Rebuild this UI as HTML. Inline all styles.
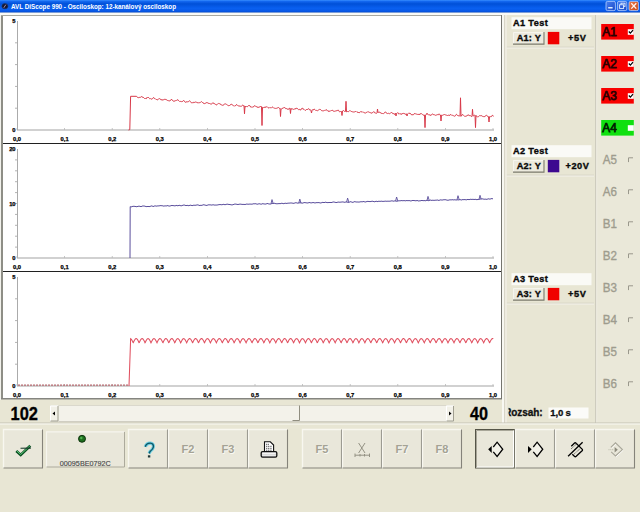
<!DOCTYPE html>
<html><head><meta charset="utf-8"><style>
html,body{margin:0;padding:0;width:640px;height:512px;overflow:hidden;background:#E8E6D4;}
svg{display:block;}
</style></head><body>
<svg width="640" height="512" viewBox="0 0 640 512">
<rect x="0" y="0" width="640" height="512" fill="#E8E6D4"/>
<defs>
<linearGradient id="tg" x1="0" y1="0" x2="0" y2="1">
<stop offset="0" stop-color="#3A90FF"/><stop offset="0.1" stop-color="#1468F0"/><stop offset="0.3" stop-color="#0050D8"/>
<stop offset="0.65" stop-color="#0A60F0"/><stop offset="0.88" stop-color="#0858E6"/><stop offset="1" stop-color="#0040C0"/></linearGradient>
<linearGradient id="bg1" x1="0" y1="0" x2="1" y2="1">
<stop offset="0" stop-color="#4A80F0"/><stop offset="1" stop-color="#1848C8"/></linearGradient>
<linearGradient id="bgc" x1="0" y1="0" x2="1" y2="1">
<stop offset="0" stop-color="#E8784A"/><stop offset="1" stop-color="#C84818"/></linearGradient>
</defs>
<rect x="0" y="0" width="640" height="12.7" fill="url(#tg)"/>
<rect x="0" y="12.7" width="640" height="2.3" fill="#FAFAF6"/>
<ellipse cx="4.9" cy="6.2" rx="3" ry="2.6" fill="#101838" stroke="#283868" stroke-width="0.6"/>
<line x1="3.8" y1="7.8" x2="5.8" y2="4.7" stroke="#C09AA8" stroke-width="0.9"/>
<text x="11" y="9.3" font-family='"Liberation Sans", sans-serif' font-size="7" font-weight="bold" fill="#FFFFFF" textLength="165" lengthAdjust="spacingAndGlyphs">AVL DiScope 990 - Osciloskop: 12-kanálový osciloskop</text>
<rect x="606" y="1.4" width="9.4" height="9.2" rx="1.5" fill="url(#bg1)" stroke="#B8D0FF" stroke-width="0.8"/>
<rect x="617.4" y="1.4" width="9.4" height="9.2" rx="1.5" fill="url(#bg1)" stroke="#B8D0FF" stroke-width="0.8"/>
<rect x="629" y="1.4" width="9.4" height="9.2" rx="1.5" fill="url(#bgc)" stroke="#B8D0FF" stroke-width="0.8"/>
<rect x="608.2" y="7" width="4.4" height="1.5" fill="#E0F0FF"/>
<rect x="621" y="3.2" width="4" height="3.2" fill="none" stroke="#E0F0FF" stroke-width="0.9"/><rect x="619.6" y="4.8" width="4" height="3.6" fill="#2a5ad8" stroke="#E0F0FF" stroke-width="0.9"/>
<path d="M631.3 3.3 L636.3 8.6 M636.3 3.3 L631.3 8.6" stroke="#FFF4F0" stroke-width="1.3"/>
<rect x="1" y="15" width="501" height="384" fill="#FFFFFF"/>
<rect x="0" y="15" width="1" height="385" fill="#F2F2EC"/>
<rect x="1" y="15" width="2" height="384" fill="#8E8E86"/>
<rect x="1" y="15" width="501" height="1" fill="#A8A8A0"/>
<rect x="1" y="398" width="501" height="1.5" fill="#858580"/>
<rect x="501" y="15" width="1" height="384" fill="#75756F"/>
<rect x="502" y="15" width="2" height="408" fill="#F8F8F2"/>
<rect x="3" y="143" width="498" height="1" fill="#202020"/>
<rect x="3" y="271" width="498" height="1" fill="#202020"/>
<rect x="17" y="21" width="1" height="109" fill="#ABABAB"/>
<rect x="17.0" y="129.5" width="477.0" height="1" fill="#A4A4A4"/>
<rect x="15.2" y="42.3" width="1.6" height="1" fill="#A0A0A0"/>
<rect x="15.2" y="64.1" width="1.6" height="1" fill="#A0A0A0"/>
<rect x="15.2" y="85.9" width="1.6" height="1" fill="#A0A0A0"/>
<rect x="15.2" y="107.7" width="1.6" height="1" fill="#A0A0A0"/>
<rect x="16.6" y="128" width="0.8" height="2" fill="#B8B8B8"/>
<text x="17.0" y="140.8" font-family='"Liberation Sans", sans-serif' font-size="5.8" font-weight="bold" fill="#000" stroke="#000" stroke-width="0.25" text-anchor="middle">0,0</text>
<rect x="64.2" y="128" width="0.8" height="2" fill="#B8B8B8"/>
<text x="64.6" y="140.8" font-family='"Liberation Sans", sans-serif' font-size="5.8" font-weight="bold" fill="#000" stroke="#000" stroke-width="0.25" text-anchor="middle">0,1</text>
<rect x="111.8" y="128" width="0.8" height="2" fill="#B8B8B8"/>
<text x="112.2" y="140.8" font-family='"Liberation Sans", sans-serif' font-size="5.8" font-weight="bold" fill="#000" stroke="#000" stroke-width="0.25" text-anchor="middle">0,2</text>
<rect x="159.4" y="128" width="0.8" height="2" fill="#B8B8B8"/>
<text x="159.8" y="140.8" font-family='"Liberation Sans", sans-serif' font-size="5.8" font-weight="bold" fill="#000" stroke="#000" stroke-width="0.25" text-anchor="middle">0,3</text>
<rect x="207.0" y="128" width="0.8" height="2" fill="#B8B8B8"/>
<text x="207.4" y="140.8" font-family='"Liberation Sans", sans-serif' font-size="5.8" font-weight="bold" fill="#000" stroke="#000" stroke-width="0.25" text-anchor="middle">0,4</text>
<rect x="254.6" y="128" width="0.8" height="2" fill="#B8B8B8"/>
<text x="255.0" y="140.8" font-family='"Liberation Sans", sans-serif' font-size="5.8" font-weight="bold" fill="#000" stroke="#000" stroke-width="0.25" text-anchor="middle">0,5</text>
<rect x="302.2" y="128" width="0.8" height="2" fill="#B8B8B8"/>
<text x="302.6" y="140.8" font-family='"Liberation Sans", sans-serif' font-size="5.8" font-weight="bold" fill="#000" stroke="#000" stroke-width="0.25" text-anchor="middle">0,6</text>
<rect x="349.8" y="128" width="0.8" height="2" fill="#B8B8B8"/>
<text x="350.2" y="140.8" font-family='"Liberation Sans", sans-serif' font-size="5.8" font-weight="bold" fill="#000" stroke="#000" stroke-width="0.25" text-anchor="middle">0,7</text>
<rect x="397.4" y="128" width="0.8" height="2" fill="#B8B8B8"/>
<text x="397.8" y="140.8" font-family='"Liberation Sans", sans-serif' font-size="5.8" font-weight="bold" fill="#000" stroke="#000" stroke-width="0.25" text-anchor="middle">0,8</text>
<rect x="445.0" y="128" width="0.8" height="2" fill="#B8B8B8"/>
<text x="445.4" y="140.8" font-family='"Liberation Sans", sans-serif' font-size="5.8" font-weight="bold" fill="#000" stroke="#000" stroke-width="0.25" text-anchor="middle">0,9</text>
<rect x="492.6" y="128" width="0.8" height="2" fill="#B8B8B8"/>
<text x="493.0" y="140.8" font-family='"Liberation Sans", sans-serif' font-size="5.8" font-weight="bold" fill="#000" stroke="#000" stroke-width="0.25" text-anchor="middle">1,0</text>
<text x="15.6" y="23" font-family='"Liberation Sans", sans-serif' font-size="5.8" font-weight="bold" fill="#000" stroke="#000" stroke-width="0.25" text-anchor="end">5</text>
<text x="15.6" y="132" font-family='"Liberation Sans", sans-serif' font-size="5.8" font-weight="bold" fill="#000" stroke="#000" stroke-width="0.25" text-anchor="end">0</text>
<rect x="17" y="149" width="1" height="109" fill="#ABABAB"/>
<rect x="17.0" y="257.5" width="477.0" height="1" fill="#A4A4A4"/>
<rect x="15.2" y="159.4" width="1.6" height="1" fill="#A0A0A0"/>
<rect x="15.2" y="170.3" width="1.6" height="1" fill="#A0A0A0"/>
<rect x="15.2" y="181.2" width="1.6" height="1" fill="#A0A0A0"/>
<rect x="15.2" y="192.1" width="1.6" height="1" fill="#A0A0A0"/>
<rect x="15.2" y="203.0" width="1.6" height="1" fill="#A0A0A0"/>
<rect x="15.2" y="213.9" width="1.6" height="1" fill="#A0A0A0"/>
<rect x="15.2" y="224.8" width="1.6" height="1" fill="#A0A0A0"/>
<rect x="15.2" y="235.7" width="1.6" height="1" fill="#A0A0A0"/>
<rect x="15.2" y="246.6" width="1.6" height="1" fill="#A0A0A0"/>
<rect x="16.6" y="256" width="0.8" height="2" fill="#B8B8B8"/>
<text x="17.0" y="268.9" font-family='"Liberation Sans", sans-serif' font-size="5.8" font-weight="bold" fill="#000" stroke="#000" stroke-width="0.25" text-anchor="middle">0,0</text>
<rect x="64.2" y="256" width="0.8" height="2" fill="#B8B8B8"/>
<text x="64.6" y="268.9" font-family='"Liberation Sans", sans-serif' font-size="5.8" font-weight="bold" fill="#000" stroke="#000" stroke-width="0.25" text-anchor="middle">0,1</text>
<rect x="111.8" y="256" width="0.8" height="2" fill="#B8B8B8"/>
<text x="112.2" y="268.9" font-family='"Liberation Sans", sans-serif' font-size="5.8" font-weight="bold" fill="#000" stroke="#000" stroke-width="0.25" text-anchor="middle">0,2</text>
<rect x="159.4" y="256" width="0.8" height="2" fill="#B8B8B8"/>
<text x="159.8" y="268.9" font-family='"Liberation Sans", sans-serif' font-size="5.8" font-weight="bold" fill="#000" stroke="#000" stroke-width="0.25" text-anchor="middle">0,3</text>
<rect x="207.0" y="256" width="0.8" height="2" fill="#B8B8B8"/>
<text x="207.4" y="268.9" font-family='"Liberation Sans", sans-serif' font-size="5.8" font-weight="bold" fill="#000" stroke="#000" stroke-width="0.25" text-anchor="middle">0,4</text>
<rect x="254.6" y="256" width="0.8" height="2" fill="#B8B8B8"/>
<text x="255.0" y="268.9" font-family='"Liberation Sans", sans-serif' font-size="5.8" font-weight="bold" fill="#000" stroke="#000" stroke-width="0.25" text-anchor="middle">0,5</text>
<rect x="302.2" y="256" width="0.8" height="2" fill="#B8B8B8"/>
<text x="302.6" y="268.9" font-family='"Liberation Sans", sans-serif' font-size="5.8" font-weight="bold" fill="#000" stroke="#000" stroke-width="0.25" text-anchor="middle">0,6</text>
<rect x="349.8" y="256" width="0.8" height="2" fill="#B8B8B8"/>
<text x="350.2" y="268.9" font-family='"Liberation Sans", sans-serif' font-size="5.8" font-weight="bold" fill="#000" stroke="#000" stroke-width="0.25" text-anchor="middle">0,7</text>
<rect x="397.4" y="256" width="0.8" height="2" fill="#B8B8B8"/>
<text x="397.8" y="268.9" font-family='"Liberation Sans", sans-serif' font-size="5.8" font-weight="bold" fill="#000" stroke="#000" stroke-width="0.25" text-anchor="middle">0,8</text>
<rect x="445.0" y="256" width="0.8" height="2" fill="#B8B8B8"/>
<text x="445.4" y="268.9" font-family='"Liberation Sans", sans-serif' font-size="5.8" font-weight="bold" fill="#000" stroke="#000" stroke-width="0.25" text-anchor="middle">0,9</text>
<rect x="492.6" y="256" width="0.8" height="2" fill="#B8B8B8"/>
<text x="493.0" y="268.9" font-family='"Liberation Sans", sans-serif' font-size="5.8" font-weight="bold" fill="#000" stroke="#000" stroke-width="0.25" text-anchor="middle">1,0</text>
<text x="15.6" y="151" font-family='"Liberation Sans", sans-serif' font-size="5.8" font-weight="bold" fill="#000" stroke="#000" stroke-width="0.25" text-anchor="end">20</text>
<text x="15.6" y="205.5" font-family='"Liberation Sans", sans-serif' font-size="5.8" font-weight="bold" fill="#000" stroke="#000" stroke-width="0.25" text-anchor="end">10</text>
<text x="15.6" y="260" font-family='"Liberation Sans", sans-serif' font-size="5.8" font-weight="bold" fill="#000" stroke="#000" stroke-width="0.25" text-anchor="end">0</text>
<rect x="17" y="277" width="1" height="109" fill="#ABABAB"/>
<rect x="17.0" y="385.5" width="477.0" height="1" fill="#A4A4A4"/>
<rect x="15.2" y="298.3" width="1.6" height="1" fill="#A0A0A0"/>
<rect x="15.2" y="320.1" width="1.6" height="1" fill="#A0A0A0"/>
<rect x="15.2" y="341.9" width="1.6" height="1" fill="#A0A0A0"/>
<rect x="15.2" y="363.7" width="1.6" height="1" fill="#A0A0A0"/>
<rect x="16.6" y="384" width="0.8" height="2" fill="#B8B8B8"/>
<text x="17.0" y="396.9" font-family='"Liberation Sans", sans-serif' font-size="5.8" font-weight="bold" fill="#000" stroke="#000" stroke-width="0.25" text-anchor="middle">0,0</text>
<rect x="64.2" y="384" width="0.8" height="2" fill="#B8B8B8"/>
<text x="64.6" y="396.9" font-family='"Liberation Sans", sans-serif' font-size="5.8" font-weight="bold" fill="#000" stroke="#000" stroke-width="0.25" text-anchor="middle">0,1</text>
<rect x="111.8" y="384" width="0.8" height="2" fill="#B8B8B8"/>
<text x="112.2" y="396.9" font-family='"Liberation Sans", sans-serif' font-size="5.8" font-weight="bold" fill="#000" stroke="#000" stroke-width="0.25" text-anchor="middle">0,2</text>
<rect x="159.4" y="384" width="0.8" height="2" fill="#B8B8B8"/>
<text x="159.8" y="396.9" font-family='"Liberation Sans", sans-serif' font-size="5.8" font-weight="bold" fill="#000" stroke="#000" stroke-width="0.25" text-anchor="middle">0,3</text>
<rect x="207.0" y="384" width="0.8" height="2" fill="#B8B8B8"/>
<text x="207.4" y="396.9" font-family='"Liberation Sans", sans-serif' font-size="5.8" font-weight="bold" fill="#000" stroke="#000" stroke-width="0.25" text-anchor="middle">0,4</text>
<rect x="254.6" y="384" width="0.8" height="2" fill="#B8B8B8"/>
<text x="255.0" y="396.9" font-family='"Liberation Sans", sans-serif' font-size="5.8" font-weight="bold" fill="#000" stroke="#000" stroke-width="0.25" text-anchor="middle">0,5</text>
<rect x="302.2" y="384" width="0.8" height="2" fill="#B8B8B8"/>
<text x="302.6" y="396.9" font-family='"Liberation Sans", sans-serif' font-size="5.8" font-weight="bold" fill="#000" stroke="#000" stroke-width="0.25" text-anchor="middle">0,6</text>
<rect x="349.8" y="384" width="0.8" height="2" fill="#B8B8B8"/>
<text x="350.2" y="396.9" font-family='"Liberation Sans", sans-serif' font-size="5.8" font-weight="bold" fill="#000" stroke="#000" stroke-width="0.25" text-anchor="middle">0,7</text>
<rect x="397.4" y="384" width="0.8" height="2" fill="#B8B8B8"/>
<text x="397.8" y="396.9" font-family='"Liberation Sans", sans-serif' font-size="5.8" font-weight="bold" fill="#000" stroke="#000" stroke-width="0.25" text-anchor="middle">0,8</text>
<rect x="445.0" y="384" width="0.8" height="2" fill="#B8B8B8"/>
<text x="445.4" y="396.9" font-family='"Liberation Sans", sans-serif' font-size="5.8" font-weight="bold" fill="#000" stroke="#000" stroke-width="0.25" text-anchor="middle">0,9</text>
<rect x="492.6" y="384" width="0.8" height="2" fill="#B8B8B8"/>
<text x="493.0" y="396.9" font-family='"Liberation Sans", sans-serif' font-size="5.8" font-weight="bold" fill="#000" stroke="#000" stroke-width="0.25" text-anchor="middle">1,0</text>
<text x="15.6" y="279" font-family='"Liberation Sans", sans-serif' font-size="5.8" font-weight="bold" fill="#000" stroke="#000" stroke-width="0.25" text-anchor="end">5</text>
<text x="15.6" y="388" font-family='"Liberation Sans", sans-serif' font-size="5.8" font-weight="bold" fill="#000" stroke="#000" stroke-width="0.25" text-anchor="end">0</text>
<path d="M18 385.2 L128.5 385.2" stroke="#B86A70" stroke-width="1.3" stroke-dasharray="2 1"/>
<path d="M128.5 130.0 L129.8 129.6 L130.6 96.3 L136.0 96.3 L136.5 96.4 L137.0 96.6 L137.5 97.4 L138.0 97.1 L138.5 97.8 L139.0 97.7 L139.5 97.4 L140.0 97.7 L140.5 97.1 L141.0 97.2 L141.5 96.6 L142.0 96.4 L142.5 97.1 L143.0 97.9 L143.5 97.5 L144.0 97.9 L144.5 98.5 L145.0 98.9 L145.5 98.5 L146.0 98.2 L146.5 98.6 L147.0 97.4 L147.5 97.9 L148.0 97.2 L148.5 97.5 L149.0 97.8 L149.5 98.3 L150.0 99.1 L150.5 98.6 L151.0 99.1 L151.5 99.1 L152.0 98.7 L152.5 98.7 L153.0 97.9 L153.5 97.6 L154.0 97.7 L154.5 98.6 L155.0 98.7 L155.5 98.9 L156.0 99.4 L156.5 99.5 L157.0 99.4 L157.5 99.8 L158.0 99.6 L158.5 98.9 L159.0 99.0 L159.5 98.6 L160.0 99.0 L160.5 99.3 L161.0 99.2 L161.5 100.2 L162.0 99.5 L162.5 100.0 L163.0 100.4 L163.5 99.7 L164.0 99.9 L164.5 99.2 L165.0 99.6 L165.5 99.4 L166.0 99.3 L166.5 100.0 L167.0 99.8 L167.5 100.5 L168.0 100.6 L168.5 100.7 L169.0 100.6 L169.5 100.9 L170.0 100.9 L170.5 100.2 L171.0 100.1 L171.5 99.2 L172.0 100.0 L172.5 100.3 L173.0 101.0 L173.5 101.2 L174.0 100.8 L174.5 101.0 L175.0 101.3 L175.5 100.6 L176.0 100.9 L176.5 100.4 L177.0 100.0 L177.5 99.6 L178.0 100.6 L178.5 100.4 L179.0 100.8 L179.5 101.3 L180.0 101.9 L180.5 101.3 L181.0 101.6 L181.5 101.6 L182.0 101.8 L182.5 101.5 L183.0 101.2 L183.5 100.3 L184.0 100.8 L184.5 101.2 L185.0 102.0 L185.5 102.4 L186.0 101.7 L186.5 101.9 L187.0 101.9 L187.5 101.8 L188.0 101.9 L188.5 101.7 L189.0 101.1 L189.5 100.6 L190.0 101.4 L190.5 101.7 L191.0 102.2 L191.5 102.9 L192.0 102.8 L192.5 102.7 L193.0 102.8 L193.5 102.7 L194.0 101.9 L194.5 102.5 L195.0 102.0 L195.5 102.0 L196.0 102.3 L196.5 102.3 L197.0 102.6 L197.5 102.5 L198.0 103.2 L198.5 102.7 L199.0 102.7 L199.5 102.7 L200.0 102.4 L200.5 102.4 L201.0 101.8 L201.5 101.6 L202.0 102.2 L202.5 102.5 L203.0 103.0 L203.5 102.9 L204.0 103.9 L204.5 103.7 L205.0 103.2 L205.5 103.2 L206.0 103.1 L206.5 102.8 L207.0 102.2 L207.5 103.0 L208.0 103.5 L208.5 103.3 L209.0 103.7 L209.5 103.5 L210.0 103.6 L210.5 103.9 L211.0 103.8 L211.5 104.2 L212.0 103.3 L212.5 102.9 L213.0 103.5 L213.5 103.1 L214.0 103.2 L214.5 103.9 L215.0 103.7 L215.5 104.4 L216.0 105.0 L216.5 104.9 L217.0 104.6 L217.5 104.0 L218.0 103.9 L218.5 103.4 L219.0 103.7 L219.5 103.6 L220.0 104.3 L220.5 104.2 L221.0 104.3 L221.5 105.1 L222.0 105.4 L222.5 105.3 L223.0 105.2 L223.5 105.0 L224.0 104.7 L224.5 103.9 L225.0 103.8 L225.5 103.9 L226.0 104.0 L226.5 104.3 L227.0 104.9 L227.5 105.0 L228.0 105.6 L228.5 105.8 L229.0 105.2 L229.5 105.5 L230.0 105.3 L230.5 105.0 L231.0 104.1 L231.5 104.3 L232.0 104.6 L232.5 104.9 L233.0 105.2 L233.5 105.8 L234.0 106.2 L234.5 106.1 L235.0 105.6 L235.5 105.6 L236.0 105.5 L236.5 104.5 L237.0 104.8 L237.5 105.4 L238.0 105.7 L238.5 105.9 L239.0 105.9 L239.5 105.8 L240.0 106.5 L240.5 106.0 L241.0 106.3 L241.5 106.3 L242.0 105.5 L242.5 105.2 L243.0 105.5 L243.5 105.7 L244.0 105.5 L244.5 113.8 L245.0 106.0 L245.5 106.9 L246.0 106.9 L246.5 106.2 L247.0 106.7 L247.5 106.7 L248.0 106.1 L248.5 105.5 L249.0 105.5 L249.5 105.5 L250.0 105.8 L250.5 107.0 L251.0 106.9 L251.5 106.9 L252.0 107.4 L252.5 106.9 L253.0 107.2 L253.5 106.9 L254.0 106.0 L254.5 105.7 L255.0 105.7 L255.5 106.0 L256.0 106.7 L256.5 106.7 L257.0 107.1 L257.5 106.9 L258.0 107.8 L258.5 107.1 L259.0 107.1 L259.5 107.0 L260.0 107.0 L260.5 106.2 L261.0 106.8 L261.5 106.7 L262.0 125.5 L262.5 107.4 L263.0 107.1 L263.5 107.6 L264.0 107.4 L264.5 107.1 L265.0 107.8 L265.5 106.9 L266.0 106.9 L266.5 106.8 L267.0 106.8 L267.5 107.0 L268.0 107.5 L268.5 107.8 L269.0 108.2 L269.5 107.7 L270.0 108.1 L270.5 107.7 L271.0 107.6 L271.5 107.8 L272.0 107.3 L272.5 107.0 L273.0 107.4 L273.5 107.9 L274.0 107.8 L274.5 108.2 L275.0 108.3 L275.5 108.4 L276.0 108.6 L276.5 108.3 L277.0 108.2 L277.5 107.9 L278.0 108.0 L278.5 107.4 L279.0 107.9 L279.5 108.4 L280.0 108.0 L280.5 116.5 L281.0 109.1 L281.5 109.1 L282.0 108.4 L282.5 108.3 L283.0 108.4 L283.5 107.8 L284.0 107.6 L284.5 107.1 L285.0 108.1 L285.5 108.6 L286.0 109.0 L286.5 108.5 L287.0 109.2 L287.5 109.3 L288.0 108.7 L288.5 109.3 L289.0 109.2 L289.5 108.2 L290.0 108.6 L290.5 113.5 L291.0 108.3 L291.5 109.2 L292.0 109.3 L292.5 108.9 L293.0 109.3 L293.5 109.4 L294.0 109.2 L294.5 109.0 L295.0 108.9 L295.5 109.0 L296.0 108.0 L296.5 108.3 L297.0 108.6 L297.5 108.5 L298.0 109.2 L298.5 109.7 L299.0 109.7 L299.5 109.3 L300.0 110.2 L300.5 109.8 L301.0 109.8 L301.5 108.6 L302.0 108.5 L302.5 108.2 L303.0 109.3 L303.5 109.1 L304.0 109.3 L304.5 109.8 L305.0 110.4 L305.5 110.4 L306.0 109.7 L306.5 109.5 L307.0 110.0 L307.5 109.4 L308.0 109.2 L308.5 108.6 L309.0 108.9 L309.5 109.9 L310.0 109.9 L310.5 109.8 L311.0 110.8 L311.5 113.0 L312.0 110.6 L312.5 109.7 L313.0 110.2 L313.5 109.1 L314.0 109.6 L314.5 109.3 L315.0 109.6 L315.5 110.1 L316.0 110.8 L316.5 110.3 L317.0 110.3 L317.5 110.7 L318.0 110.3 L318.5 110.0 L319.0 109.8 L319.5 109.4 L320.0 109.2 L320.5 109.5 L321.0 109.9 L321.5 110.6 L322.0 110.4 L322.5 110.8 L323.0 110.6 L323.5 110.8 L324.0 110.4 L324.5 110.4 L325.0 109.9 L325.5 110.3 L326.0 109.8 L326.5 109.7 L327.0 110.4 L327.5 111.1 L328.0 110.6 L328.5 111.5 L329.0 111.2 L329.5 111.2 L330.0 111.4 L330.5 110.8 L331.0 110.6 L331.5 110.5 L332.0 110.5 L332.5 110.2 L333.0 111.0 L333.5 111.2 L334.0 111.4 L334.5 111.3 L335.0 111.4 L335.5 111.0 L336.0 111.0 L336.5 110.7 L337.0 111.1 L337.5 110.3 L338.0 109.9 L338.5 110.2 L339.0 111.4 L339.5 111.7 L340.0 111.7 L340.5 111.5 L341.0 111.5 L341.5 111.5 L342.0 115.5 L342.5 111.0 L343.0 111.1 L343.5 110.5 L344.0 111.0 L344.5 111.4 L345.0 111.4 L345.5 111.4 L346.0 101.3 L346.5 111.8 L347.0 111.9 L347.5 111.5 L348.0 111.7 L348.5 111.6 L349.0 111.3 L349.5 110.7 L350.0 110.9 L350.5 110.8 L351.0 111.4 L351.5 111.5 L352.0 112.0 L352.5 111.8 L353.0 111.8 L353.5 112.0 L354.0 111.8 L354.5 111.9 L355.0 111.6 L355.5 111.5 L356.0 111.3 L356.5 111.8 L357.0 112.3 L357.5 112.1 L358.0 112.2 L358.5 113.0 L359.0 112.2 L359.5 112.7 L360.0 112.4 L360.5 111.6 L361.0 112.1 L361.5 111.8 L362.0 111.6 L362.5 112.1 L363.0 112.5 L363.5 112.1 L364.0 112.7 L364.5 112.8 L365.0 113.1 L365.5 113.0 L366.0 112.8 L366.5 112.4 L367.0 112.4 L367.5 111.8 L368.0 112.0 L368.5 111.9 L369.0 112.0 L369.5 112.4 L370.0 112.8 L370.5 112.6 L371.0 113.4 L371.5 113.0 L372.0 112.9 L372.5 112.6 L373.0 112.3 L373.5 111.8 L374.0 111.6 L374.5 112.7 L375.0 113.0 L375.5 113.0 L376.0 113.2 L376.5 113.4 L377.0 112.8 L377.5 109.0 L378.0 112.7 L378.5 112.2 L379.0 112.1 L379.5 112.2 L380.0 112.0 L380.5 112.9 L381.0 113.5 L381.5 113.3 L382.0 113.3 L382.5 113.5 L383.0 113.6 L383.5 113.6 L384.0 113.3 L384.5 113.0 L385.0 112.1 L385.5 111.9 L386.0 112.4 L386.5 113.2 L387.0 113.1 L387.5 113.6 L388.0 113.2 L388.5 113.3 L389.0 113.4 L389.5 113.7 L390.0 113.5 L390.5 113.2 L391.0 112.5 L391.5 112.5 L392.0 112.8 L392.5 113.2 L393.0 113.1 L393.5 114.1 L394.0 113.6 L394.5 114.4 L395.0 114.3 L395.5 113.3 L396.0 116.0 L396.5 113.5 L397.0 113.4 L397.5 112.7 L398.0 112.9 L398.5 113.2 L399.0 114.2 L399.5 113.7 L400.0 114.2 L400.5 113.8 L401.0 114.1 L401.5 114.4 L402.0 113.3 L402.5 113.7 L403.0 113.1 L403.5 113.4 L404.0 113.6 L404.5 113.5 L405.0 114.4 L405.5 114.2 L406.0 113.9 L406.5 113.9 L407.0 116.0 L407.5 114.1 L408.0 113.7 L408.5 113.2 L409.0 113.1 L409.5 113.1 L410.0 114.0 L410.5 113.5 L411.0 114.5 L411.5 114.8 L412.0 114.2 L412.5 115.0 L413.0 114.7 L413.5 114.7 L414.0 113.8 L414.5 113.6 L415.0 113.3 L415.5 114.0 L416.0 114.0 L416.5 114.1 L417.0 114.4 L417.5 114.4 L418.0 114.3 L418.5 114.3 L419.0 115.0 L419.5 114.2 L420.0 114.6 L420.5 113.6 L421.0 113.3 L421.5 113.8 L422.0 113.8 L422.5 114.3 L423.0 115.1 L423.5 115.2 L424.0 115.3 L424.5 115.1 L425.0 127.6 L425.5 115.1 L426.0 114.4 L426.5 114.3 L427.0 113.2 L427.5 114.2 L428.0 114.3 L428.5 114.9 L429.0 115.0 L429.5 114.9 L430.0 114.7 L430.5 115.5 L431.0 114.6 L431.5 114.8 L432.0 114.4 L432.5 114.0 L433.0 114.1 L433.5 114.7 L434.0 114.3 L434.5 115.0 L435.0 114.9 L435.5 115.3 L436.0 115.2 L436.5 115.0 L437.0 114.8 L437.5 114.6 L438.0 115.1 L438.5 114.3 L439.0 113.8 L439.5 114.8 L440.0 115.3 L440.5 115.0 L441.0 121.0 L441.5 115.2 L442.0 115.1 L442.5 115.3 L443.0 114.9 L443.5 114.8 L444.0 114.6 L444.5 114.5 L445.0 114.7 L445.5 114.9 L446.0 114.9 L446.5 115.2 L447.0 115.5 L447.5 115.5 L448.0 115.5 L448.5 115.2 L449.0 115.2 L449.5 115.7 L450.0 114.6 L450.5 114.6 L451.0 114.6 L451.5 115.2 L452.0 114.9 L452.5 115.3 L453.0 115.5 L453.5 115.7 L454.0 115.8 L454.5 116.2 L455.0 116.0 L455.5 115.7 L456.0 114.6 L456.5 114.3 L457.0 114.9 L457.5 115.5 L458.0 115.4 L458.5 115.8 L459.0 115.4 L459.5 115.9 L460.0 116.4 L460.5 97.8 L461.0 116.1 L461.5 116.0 L462.0 114.9 L462.5 114.5 L463.0 114.6 L463.5 115.3 L464.0 115.8 L464.5 116.3 L465.0 116.3 L465.5 116.3 L466.0 116.4 L466.5 116.0 L467.0 115.9 L467.5 115.2 L468.0 115.6 L468.5 114.7 L469.0 115.6 L469.5 115.6 L470.0 115.6 L470.5 115.7 L471.0 116.0 L471.5 116.5 L472.0 116.5 L472.5 109.3 L473.0 115.6 L473.5 115.8 L474.0 115.5 L474.5 115.0 L475.0 115.1 L475.5 127.6 L476.0 115.5 L476.5 116.1 L477.0 116.4 L477.5 117.0 L478.0 116.6 L478.5 116.7 L479.0 116.1 L479.5 115.6 L480.0 115.3 L480.5 115.7 L481.0 115.7 L481.5 115.7 L482.0 115.7 L482.5 116.4 L483.0 116.8 L483.5 116.6 L484.0 116.4 L484.5 116.6 L485.0 116.7 L485.5 115.7 L486.0 115.2 L486.5 115.2 L487.0 115.7 L487.5 116.3 L488.0 116.1 L488.5 116.9 L489.0 122.0 L489.5 116.8 L490.0 116.5 L490.5 117.1 L491.0 116.2 L491.5 116.4 L492.0 115.5 L492.5 115.3 L493.0 116.2 L493.5 116.1" fill="none" stroke="#D83848" stroke-width="1"/>
<path d="M130.0 258.0 L130.2 206.6 L131.0 207.0 L132.0 206.6 L133.0 206.3 L134.0 206.3 L135.0 206.4 L136.0 206.6 L137.0 206.8 L138.0 206.2 L139.0 206.3 L140.0 206.2 L141.0 206.8 L142.0 206.1 L143.0 206.0 L144.0 206.0 L145.0 206.2 L146.0 206.6 L147.0 206.6 L148.0 206.4 L149.0 206.6 L150.0 206.5 L151.0 206.0 L152.0 205.9 L153.0 206.5 L154.0 206.3 L155.0 205.7 L156.0 206.2 L157.0 206.0 L158.0 205.9 L159.0 205.9 L160.0 205.7 L161.0 205.6 L162.0 205.8 L163.0 205.8 L164.0 206.3 L165.0 205.6 L166.0 206.2 L167.0 205.6 L168.0 205.7 L169.0 206.1 L170.0 206.0 L171.0 205.7 L172.0 205.4 L173.0 205.7 L174.0 205.6 L175.0 206.0 L176.0 205.4 L177.0 205.5 L178.0 205.9 L179.0 205.2 L180.0 205.5 L181.0 205.8 L182.0 205.7 L183.0 205.1 L184.0 205.1 L185.0 205.1 L186.0 205.8 L187.0 205.2 L188.0 205.6 L189.0 205.7 L190.0 205.2 L191.0 205.2 L192.0 205.7 L193.0 205.4 L194.0 205.1 L195.0 205.4 L196.0 205.1 L197.0 205.0 L198.0 204.8 L199.0 205.4 L200.0 205.5 L201.0 205.2 L202.0 205.5 L203.0 204.7 L204.0 204.9 L205.0 205.0 L206.0 205.4 L207.0 205.4 L208.0 204.9 L209.0 204.8 L210.0 204.9 L211.0 204.9 L212.0 205.2 L213.0 204.6 L214.0 205.1 L215.0 205.0 L216.0 205.1 L217.0 205.0 L218.0 204.9 L219.0 204.6 L220.0 204.6 L221.0 204.6 L222.0 204.9 L223.0 204.3 L224.0 204.4 L225.0 204.8 L226.0 204.4 L227.0 204.2 L228.0 204.2 L229.0 204.6 L230.0 204.4 L231.0 204.9 L232.0 204.8 L233.0 204.8 L234.0 204.2 L235.0 204.1 L236.0 204.1 L237.0 204.4 L238.0 204.5 L239.0 204.3 L240.0 204.1 L241.0 204.2 L242.0 204.4 L243.0 204.4 L244.0 204.4 L245.0 204.5 L246.0 204.3 L247.0 203.9 L248.0 204.4 L249.0 204.0 L250.0 204.2 L251.0 204.0 L252.0 204.3 L253.0 203.8 L254.0 203.8 L255.0 203.8 L256.0 203.7 L257.0 204.3 L258.0 204.0 L259.0 203.8 L260.0 203.8 L261.0 204.3 L262.0 203.9 L263.0 203.6 L264.0 204.1 L265.0 203.9 L266.0 204.2 L267.0 203.4 L268.0 203.7 L269.0 204.0 L270.0 204.0 L271.0 204.0 L272.0 203.3 L273.0 203.5 L274.0 203.3 L275.0 203.3 L276.0 203.9 L277.0 203.6 L278.0 203.9 L279.0 203.4 L280.0 203.8 L281.0 203.4 L282.0 203.2 L283.0 203.6 L284.0 203.7 L285.0 203.1 L286.0 203.4 L287.0 203.4 L288.0 203.1 L289.0 203.2 L290.0 203.0 L291.0 203.0 L292.0 203.0 L293.0 203.3 L294.0 203.3 L295.0 202.9 L296.0 202.7 L297.0 203.0 L298.0 203.2 L299.0 202.8 L300.0 202.9 L301.0 202.8 L302.0 203.2 L303.0 203.0 L304.0 202.6 L305.0 202.6 L306.0 202.8 L307.0 202.9 L308.0 203.0 L309.0 202.5 L310.0 202.6 L311.0 203.0 L312.0 202.7 L313.0 202.6 L314.0 202.6 L315.0 203.1 L316.0 202.6 L317.0 202.7 L318.0 202.6 L319.0 202.6 L320.0 202.9 L321.0 203.0 L322.0 202.5 L323.0 202.3 L324.0 202.7 L325.0 202.3 L326.0 202.1 L327.0 202.8 L328.0 202.4 L329.0 202.7 L330.0 202.3 L331.0 202.7 L332.0 202.3 L333.0 202.1 L334.0 201.9 L335.0 202.4 L336.0 202.4 L337.0 202.6 L338.0 201.9 L339.0 202.3 L340.0 202.1 L341.0 202.2 L342.0 201.9 L343.0 202.0 L344.0 202.1 L345.0 202.4 L346.0 201.8 L347.0 202.1 L348.0 202.3 L349.0 202.4 L350.0 201.8 L351.0 201.7 L352.0 202.3 L353.0 202.3 L354.0 201.9 L355.0 201.5 L356.0 202.2 L357.0 201.8 L358.0 202.2 L359.0 201.9 L360.0 202.1 L361.0 201.5 L362.0 202.0 L363.0 201.5 L364.0 201.6 L365.0 202.0 L366.0 201.9 L367.0 201.4 L368.0 201.4 L369.0 201.5 L370.0 201.6 L371.0 201.5 L372.0 201.2 L373.0 201.3 L374.0 201.7 L375.0 201.8 L376.0 201.1 L377.0 201.5 L378.0 201.6 L379.0 201.0 L380.0 201.6 L381.0 201.0 L382.0 201.4 L383.0 201.3 L384.0 201.4 L385.0 201.1 L386.0 201.2 L387.0 201.3 L388.0 201.1 L389.0 201.3 L390.0 201.1 L391.0 201.1 L392.0 200.7 L393.0 201.2 L394.0 201.1 L395.0 200.8 L396.0 201.2 L397.0 201.2 L398.0 201.0 L399.0 200.7 L400.0 200.9 L401.0 200.6 L402.0 200.6 L403.0 200.8 L404.0 200.5 L405.0 200.8 L406.0 200.8 L407.0 200.4 L408.0 200.9 L409.0 200.4 L410.0 200.9 L411.0 200.9 L412.0 200.7 L413.0 200.3 L414.0 200.7 L415.0 200.5 L416.0 201.0 L417.0 200.3 L418.0 200.9 L419.0 201.0 L420.0 200.7 L421.0 200.8 L422.0 200.2 L423.0 200.9 L424.0 200.4 L425.0 200.8 L426.0 200.7 L427.0 200.1 L428.0 200.6 L429.0 200.7 L430.0 200.0 L431.0 200.2 L432.0 200.5 L433.0 200.0 L434.0 200.6 L435.0 200.0 L436.0 200.4 L437.0 199.9 L438.0 200.2 L439.0 200.5 L440.0 199.9 L441.0 199.9 L442.0 200.1 L443.0 199.9 L444.0 199.7 L445.0 199.8 L446.0 199.7 L447.0 200.3 L448.0 200.1 L449.0 200.2 L450.0 199.6 L451.0 200.1 L452.0 199.6 L453.0 199.9 L454.0 199.9 L455.0 199.7 L456.0 200.1 L457.0 199.8 L458.0 199.8 L459.0 200.0 L460.0 199.4 L461.0 200.1 L462.0 199.8 L463.0 199.5 L464.0 199.8 L465.0 199.4 L466.0 200.0 L467.0 199.6 L468.0 199.4 L469.0 199.7 L470.0 199.4 L471.0 199.2 L472.0 199.6 L473.0 199.1 L474.0 199.7 L475.0 199.2 L476.0 199.5 L477.0 199.7 L478.0 199.4 L479.0 199.4 L480.0 199.1 L481.0 198.9 L482.0 198.9 L483.0 198.9 L484.0 199.3 L485.0 199.1 L486.0 199.2 L487.0 199.4 L488.0 198.8 L489.0 198.9 L490.0 199.2 L491.0 198.7 L492.0 198.6 L493.0 198.9" fill="none" stroke="#5A4E9C" stroke-width="1"/>
<path d="M271.0 203.6 L272.0 199.6 L273.2 203.6" fill="none" stroke="#5A4E9C" stroke-width="0.9"/>
<path d="M298.8 203.1 L299.8 199.1 L301.0 203.1" fill="none" stroke="#5A4E9C" stroke-width="0.9"/>
<path d="M346.6 202.1 L347.6 198.1 L348.8 202.1" fill="none" stroke="#5A4E9C" stroke-width="0.9"/>
<path d="M395.6 201.0 L396.6 197.0 L397.8 201.0" fill="none" stroke="#5A4E9C" stroke-width="0.9"/>
<path d="M427.0 200.4 L428.0 196.4 L429.2 200.4" fill="none" stroke="#5A4E9C" stroke-width="0.9"/>
<path d="M457.0 199.7 L458.0 195.7 L459.2 199.7" fill="none" stroke="#5A4E9C" stroke-width="0.9"/>
<path d="M479.0 199.3 L480.0 195.3 L481.2 199.3" fill="none" stroke="#5A4E9C" stroke-width="0.9"/>
<path d="M129.00 386.00 L130.50 342.50 L130.60 338.68 L130.90 338.87 L131.20 339.15 L131.50 339.53 L131.80 340.00 L132.10 340.54 L132.40 341.13 L132.70 341.78 L133.00 342.45 L133.30 342.67 L133.60 342.00 L133.90 341.34 L134.20 340.73 L134.50 340.17 L134.80 339.68 L135.10 339.27 L135.40 338.95 L135.70 338.73 L136.00 338.62 L136.30 338.61 L136.60 338.71 L136.90 338.92 L137.20 339.22 L137.50 339.62 L137.80 340.10 L138.10 340.65 L138.40 341.26 L138.70 341.91 L139.00 342.58 L139.30 342.54 L139.60 341.86 L139.90 341.22 L140.20 340.61 L140.50 340.07 L140.80 339.59 L141.10 339.20 L141.40 338.90 L141.70 338.70 L142.00 338.61 L142.30 338.62 L142.60 338.74 L142.90 338.97 L143.20 339.29 L143.50 339.71 L143.80 340.21 L144.10 340.77 L144.40 341.39 L144.70 342.04 L145.00 342.72 L145.30 342.40 L145.60 341.73 L145.90 341.09 L146.20 340.50 L146.50 339.97 L146.80 339.51 L147.10 339.13 L147.40 338.85 L147.70 338.67 L148.00 338.60 L148.30 338.64 L148.60 338.78 L148.90 339.03 L149.20 339.37 L149.50 339.80 L149.80 340.31 L150.10 340.89 L150.40 341.52 L150.70 342.18 L151.00 342.85 L151.30 342.27 L151.60 341.60 L151.90 340.97 L152.20 340.39 L152.50 339.87 L152.80 339.42 L153.10 339.07 L153.40 338.81 L153.70 338.65 L154.00 338.60 L154.30 338.66 L154.60 338.82 L154.90 339.09 L155.20 339.45 L155.50 339.90 L155.80 340.42 L156.10 341.01 L156.40 341.64 L156.70 342.31 L157.00 342.81 L157.30 342.13 L157.60 341.47 L157.90 340.85 L158.20 340.28 L158.50 339.77 L158.80 339.35 L159.10 339.01 L159.40 338.77 L159.70 338.63 L160.00 338.60 L160.30 338.68 L160.60 338.87 L160.90 339.15 L161.20 339.53 L161.50 340.00 L161.80 340.54 L162.10 341.13 L162.40 341.78 L162.70 342.45 L163.00 342.67 L163.30 342.00 L163.60 341.34 L163.90 340.73 L164.20 340.17 L164.50 339.68 L164.80 339.27 L165.10 338.95 L165.40 338.73 L165.70 338.62 L166.00 338.61 L166.30 338.71 L166.60 338.92 L166.90 339.22 L167.20 339.62 L167.50 340.10 L167.80 340.65 L168.10 341.26 L168.40 341.91 L168.70 342.58 L169.00 342.54 L169.30 341.86 L169.60 341.22 L169.90 340.61 L170.20 340.07 L170.50 339.59 L170.80 339.20 L171.10 338.90 L171.40 338.70 L171.70 338.61 L172.00 338.62 L172.30 338.74 L172.60 338.97 L172.90 339.29 L173.20 339.71 L173.50 340.21 L173.80 340.77 L174.10 341.39 L174.40 342.04 L174.70 342.72 L175.00 342.40 L175.30 341.73 L175.60 341.09 L175.90 340.50 L176.20 339.97 L176.50 339.51 L176.80 339.13 L177.10 338.85 L177.40 338.67 L177.70 338.60 L178.00 338.64 L178.30 338.78 L178.60 339.03 L178.90 339.37 L179.20 339.80 L179.50 340.31 L179.80 340.89 L180.10 341.52 L180.40 342.18 L180.70 342.85 L181.00 342.27 L181.30 341.60 L181.60 340.97 L181.90 340.39 L182.20 339.87 L182.50 339.42 L182.80 339.07 L183.10 338.81 L183.40 338.65 L183.70 338.60 L184.00 338.66 L184.30 338.82 L184.60 339.09 L184.90 339.45 L185.20 339.90 L185.50 340.42 L185.80 341.01 L186.10 341.64 L186.40 342.31 L186.70 342.81 L187.00 342.13 L187.30 341.47 L187.60 340.85 L187.90 340.28 L188.20 339.77 L188.50 339.35 L188.80 339.01 L189.10 338.77 L189.40 338.63 L189.70 338.60 L190.00 338.68 L190.30 338.87 L190.60 339.15 L190.90 339.53 L191.20 340.00 L191.50 340.54 L191.80 341.13 L192.10 341.78 L192.40 342.45 L192.70 342.67 L193.00 342.00 L193.30 341.34 L193.60 340.73 L193.90 340.17 L194.20 339.68 L194.50 339.27 L194.80 338.95 L195.10 338.73 L195.40 338.62 L195.70 338.61 L196.00 338.71 L196.30 338.92 L196.60 339.22 L196.90 339.62 L197.20 340.10 L197.50 340.65 L197.80 341.26 L198.10 341.91 L198.40 342.58 L198.70 342.54 L199.00 341.86 L199.30 341.22 L199.60 340.61 L199.90 340.07 L200.20 339.59 L200.50 339.20 L200.80 338.90 L201.10 338.70 L201.40 338.61 L201.70 338.62 L202.00 338.74 L202.30 338.97 L202.60 339.29 L202.90 339.71 L203.20 340.21 L203.50 340.77 L203.80 341.39 L204.10 342.04 L204.40 342.72 L204.70 342.40 L205.00 341.73 L205.30 341.09 L205.60 340.50 L205.90 339.97 L206.20 339.51 L206.50 339.13 L206.80 338.85 L207.10 338.67 L207.40 338.60 L207.70 338.64 L208.00 338.78 L208.30 339.03 L208.60 339.37 L208.90 339.80 L209.20 340.31 L209.50 340.89 L209.80 341.52 L210.10 342.18 L210.40 342.85 L210.70 342.27 L211.00 341.60 L211.30 340.97 L211.60 340.39 L211.90 339.87 L212.20 339.42 L212.50 339.07 L212.80 338.81 L213.10 338.65 L213.40 338.60 L213.70 338.66 L214.00 338.82 L214.30 339.09 L214.60 339.45 L214.90 339.90 L215.20 340.42 L215.50 341.01 L215.80 341.64 L216.10 342.31 L216.40 342.81 L216.70 342.13 L217.00 341.47 L217.30 340.85 L217.60 340.28 L217.90 339.77 L218.20 339.35 L218.50 339.01 L218.80 338.77 L219.10 338.63 L219.40 338.60 L219.70 338.68 L220.00 338.87 L220.30 339.15 L220.60 339.53 L220.90 340.00 L221.20 340.54 L221.50 341.13 L221.80 341.78 L222.10 342.45 L222.40 342.67 L222.70 342.00 L223.00 341.34 L223.30 340.73 L223.60 340.17 L223.90 339.68 L224.20 339.27 L224.50 338.95 L224.80 338.73 L225.10 338.62 L225.40 338.61 L225.70 338.71 L226.00 338.92 L226.30 339.22 L226.60 339.62 L226.90 340.10 L227.20 340.65 L227.50 341.26 L227.80 341.91 L228.10 342.58 L228.40 342.54 L228.70 341.86 L229.00 341.22 L229.30 340.61 L229.60 340.07 L229.90 339.59 L230.20 339.20 L230.50 338.90 L230.80 338.70 L231.10 338.61 L231.40 338.62 L231.70 338.74 L232.00 338.97 L232.30 339.29 L232.60 339.71 L232.90 340.21 L233.20 340.77 L233.50 341.39 L233.80 342.04 L234.10 342.72 L234.40 342.40 L234.70 341.73 L235.00 341.09 L235.30 340.50 L235.60 339.97 L235.90 339.51 L236.20 339.13 L236.50 338.85 L236.80 338.67 L237.10 338.60 L237.40 338.64 L237.70 338.78 L238.00 339.03 L238.30 339.37 L238.60 339.80 L238.90 340.31 L239.20 340.89 L239.50 341.52 L239.80 342.18 L240.10 342.85 L240.40 342.27 L240.70 341.60 L241.00 340.97 L241.30 340.39 L241.60 339.87 L241.90 339.42 L242.20 339.07 L242.50 338.81 L242.80 338.65 L243.10 338.60 L243.40 338.66 L243.70 338.82 L244.00 339.09 L244.30 339.45 L244.60 339.90 L244.90 340.42 L245.20 341.01 L245.50 341.64 L245.80 342.31 L246.10 342.81 L246.40 342.13 L246.70 341.47 L247.00 340.85 L247.30 340.28 L247.60 339.77 L247.90 339.35 L248.20 339.01 L248.50 338.77 L248.80 338.63 L249.10 338.60 L249.40 338.68 L249.70 338.87 L250.00 339.15 L250.30 339.53 L250.60 340.00 L250.90 340.54 L251.20 341.13 L251.50 341.78 L251.80 342.45 L252.10 342.67 L252.40 342.00 L252.70 341.34 L253.00 340.73 L253.30 340.17 L253.60 339.68 L253.90 339.27 L254.20 338.95 L254.50 338.73 L254.80 338.62 L255.10 338.61 L255.40 338.71 L255.70 338.92 L256.00 339.22 L256.30 339.62 L256.60 340.10 L256.90 340.65 L257.20 341.26 L257.50 341.91 L257.80 342.58 L258.10 342.54 L258.40 341.86 L258.70 341.22 L259.00 340.61 L259.30 340.07 L259.60 339.59 L259.90 339.20 L260.20 338.90 L260.50 338.70 L260.80 338.61 L261.10 338.62 L261.40 338.74 L261.70 338.97 L262.00 339.29 L262.30 339.71 L262.60 340.21 L262.90 340.77 L263.20 341.39 L263.50 342.04 L263.80 342.72 L264.10 342.40 L264.40 341.73 L264.70 341.09 L265.00 340.50 L265.30 339.97 L265.60 339.51 L265.90 339.13 L266.20 338.85 L266.50 338.67 L266.80 338.60 L267.10 338.64 L267.40 338.78 L267.70 339.03 L268.00 339.37 L268.30 339.80 L268.60 340.31 L268.90 340.89 L269.20 341.52 L269.50 342.18 L269.80 342.85 L270.10 342.27 L270.40 341.60 L270.70 340.97 L271.00 340.39 L271.30 339.87 L271.60 339.42 L271.90 339.07 L272.20 338.81 L272.50 338.65 L272.80 338.60 L273.10 338.66 L273.40 338.82 L273.70 339.09 L274.00 339.45 L274.30 339.90 L274.60 340.42 L274.90 341.01 L275.20 341.64 L275.50 342.31 L275.80 342.81 L276.10 342.13 L276.40 341.47 L276.70 340.85 L277.00 340.28 L277.30 339.77 L277.60 339.35 L277.90 339.01 L278.20 338.77 L278.50 338.63 L278.80 338.60 L279.10 338.68 L279.40 338.87 L279.70 339.15 L280.00 339.53 L280.30 340.00 L280.60 340.54 L280.90 341.13 L281.20 341.78 L281.50 342.45 L281.80 342.67 L282.10 342.00 L282.40 341.34 L282.70 340.73 L283.00 340.17 L283.30 339.68 L283.60 339.27 L283.90 338.95 L284.20 338.73 L284.50 338.62 L284.80 338.61 L285.10 338.71 L285.40 338.92 L285.70 339.22 L286.00 339.62 L286.30 340.10 L286.60 340.65 L286.90 341.26 L287.20 341.91 L287.50 342.58 L287.80 342.54 L288.10 341.86 L288.40 341.22 L288.70 340.61 L289.00 340.07 L289.30 339.59 L289.60 339.20 L289.90 338.90 L290.20 338.70 L290.50 338.61 L290.80 338.62 L291.10 338.74 L291.40 338.97 L291.70 339.29 L292.00 339.71 L292.30 340.21 L292.60 340.77 L292.90 341.39 L293.20 342.04 L293.50 342.72 L293.80 342.40 L294.10 341.73 L294.40 341.09 L294.70 340.50 L295.00 339.97 L295.30 339.51 L295.60 339.13 L295.90 338.85 L296.20 338.67 L296.50 338.60 L296.80 338.64 L297.10 338.78 L297.40 339.03 L297.70 339.37 L298.00 339.80 L298.30 340.31 L298.60 340.89 L298.90 341.52 L299.20 342.18 L299.50 342.85 L299.80 342.27 L300.10 341.60 L300.40 340.97 L300.70 340.39 L301.00 339.87 L301.30 339.42 L301.60 339.07 L301.90 338.81 L302.20 338.65 L302.50 338.60 L302.80 338.66 L303.10 338.82 L303.40 339.09 L303.70 339.45 L304.00 339.90 L304.30 340.42 L304.60 341.01 L304.90 341.64 L305.20 342.31 L305.50 342.81 L305.80 342.13 L306.10 341.47 L306.40 340.85 L306.70 340.28 L307.00 339.77 L307.30 339.35 L307.60 339.01 L307.90 338.77 L308.20 338.63 L308.50 338.60 L308.80 338.68 L309.10 338.87 L309.40 339.15 L309.70 339.53 L310.00 340.00 L310.30 340.54 L310.60 341.13 L310.90 341.78 L311.20 342.45 L311.50 342.67 L311.80 342.00 L312.10 341.34 L312.40 340.73 L312.70 340.17 L313.00 339.68 L313.30 339.27 L313.60 338.95 L313.90 338.73 L314.20 338.62 L314.50 338.61 L314.80 338.71 L315.10 338.92 L315.40 339.22 L315.70 339.62 L316.00 340.10 L316.30 340.65 L316.60 341.26 L316.90 341.91 L317.20 342.58 L317.50 342.54 L317.80 341.86 L318.10 341.22 L318.40 340.61 L318.70 340.07 L319.00 339.59 L319.30 339.20 L319.60 338.90 L319.90 338.70 L320.20 338.61 L320.50 338.62 L320.80 338.74 L321.10 338.97 L321.40 339.29 L321.70 339.71 L322.00 340.21 L322.30 340.77 L322.60 341.39 L322.90 342.04 L323.20 342.72 L323.50 342.40 L323.80 341.73 L324.10 341.09 L324.40 340.50 L324.70 339.97 L325.00 339.51 L325.30 339.13 L325.60 338.85 L325.90 338.67 L326.20 338.60 L326.50 338.64 L326.80 338.78 L327.10 339.03 L327.40 339.37 L327.70 339.80 L328.00 340.31 L328.30 340.89 L328.60 341.52 L328.90 342.18 L329.20 342.85 L329.50 342.27 L329.80 341.60 L330.10 340.97 L330.40 340.39 L330.70 339.87 L331.00 339.42 L331.30 339.07 L331.60 338.81 L331.90 338.65 L332.20 338.60 L332.50 338.66 L332.80 338.82 L333.10 339.09 L333.40 339.45 L333.70 339.90 L334.00 340.42 L334.30 341.01 L334.60 341.64 L334.90 342.31 L335.20 342.81 L335.50 342.13 L335.80 341.47 L336.10 340.85 L336.40 340.28 L336.70 339.77 L337.00 339.35 L337.30 339.01 L337.60 338.77 L337.90 338.63 L338.20 338.60 L338.50 338.68 L338.80 338.87 L339.10 339.15 L339.40 339.53 L339.70 340.00 L340.00 340.54 L340.30 341.13 L340.60 341.78 L340.90 342.45 L341.20 342.67 L341.50 342.00 L341.80 341.34 L342.10 340.73 L342.40 340.17 L342.70 339.68 L343.00 339.27 L343.30 338.95 L343.60 338.73 L343.90 338.62 L344.20 338.61 L344.50 338.71 L344.80 338.92 L345.10 339.22 L345.40 339.62 L345.70 340.10 L346.00 340.65 L346.30 341.26 L346.60 341.91 L346.90 342.58 L347.20 342.54 L347.50 341.86 L347.80 341.22 L348.10 340.61 L348.40 340.07 L348.70 339.59 L349.00 339.20 L349.30 338.90 L349.60 338.70 L349.90 338.61 L350.20 338.62 L350.50 338.74 L350.80 338.97 L351.10 339.29 L351.40 339.71 L351.70 340.21 L352.00 340.77 L352.30 341.39 L352.60 342.04 L352.90 342.72 L353.20 342.40 L353.50 341.73 L353.80 341.09 L354.10 340.50 L354.40 339.97 L354.70 339.51 L355.00 339.13 L355.30 338.85 L355.60 338.67 L355.90 338.60 L356.20 338.64 L356.50 338.78 L356.80 339.03 L357.10 339.37 L357.40 339.80 L357.70 340.31 L358.00 340.89 L358.30 341.52 L358.60 342.18 L358.90 342.85 L359.20 342.27 L359.50 341.60 L359.80 340.97 L360.10 340.39 L360.40 339.87 L360.70 339.42 L361.00 339.07 L361.30 338.81 L361.60 338.65 L361.90 338.60 L362.20 338.66 L362.50 338.82 L362.80 339.09 L363.10 339.45 L363.40 339.90 L363.70 340.42 L364.00 341.01 L364.30 341.64 L364.60 342.31 L364.90 342.81 L365.20 342.13 L365.50 341.47 L365.80 340.85 L366.10 340.28 L366.40 339.77 L366.70 339.35 L367.00 339.01 L367.30 338.77 L367.60 338.63 L367.90 338.60 L368.20 338.68 L368.50 338.87 L368.80 339.15 L369.10 339.53 L369.40 340.00 L369.70 340.54 L370.00 341.13 L370.30 341.78 L370.60 342.45 L370.90 342.67 L371.20 342.00 L371.50 341.34 L371.80 340.73 L372.10 340.17 L372.40 339.68 L372.70 339.27 L373.00 338.95 L373.30 338.73 L373.60 338.62 L373.90 338.61 L374.20 338.71 L374.50 338.92 L374.80 339.22 L375.10 339.62 L375.40 340.10 L375.70 340.65 L376.00 341.26 L376.30 341.91 L376.60 342.58 L376.90 342.54 L377.20 341.86 L377.50 341.22 L377.80 340.61 L378.10 340.07 L378.40 339.59 L378.70 339.20 L379.00 338.90 L379.30 338.70 L379.60 338.61 L379.90 338.62 L380.20 338.74 L380.50 338.97 L380.80 339.29 L381.10 339.71 L381.40 340.21 L381.70 340.77 L382.00 341.39 L382.30 342.04 L382.60 342.72 L382.90 342.40 L383.20 341.73 L383.50 341.09 L383.80 340.50 L384.10 339.97 L384.40 339.51 L384.70 339.13 L385.00 338.85 L385.30 338.67 L385.60 338.60 L385.90 338.64 L386.20 338.78 L386.50 339.03 L386.80 339.37 L387.10 339.80 L387.40 340.31 L387.70 340.89 L388.00 341.52 L388.30 342.18 L388.60 342.85 L388.90 342.27 L389.20 341.60 L389.50 340.97 L389.80 340.39 L390.10 339.87 L390.40 339.42 L390.70 339.07 L391.00 338.81 L391.30 338.65 L391.60 338.60 L391.90 338.66 L392.20 338.82 L392.50 339.09 L392.80 339.45 L393.10 339.90 L393.40 340.42 L393.70 341.01 L394.00 341.64 L394.30 342.31 L394.60 342.81 L394.90 342.13 L395.20 341.47 L395.50 340.85 L395.80 340.28 L396.10 339.77 L396.40 339.35 L396.70 339.01 L397.00 338.77 L397.30 338.63 L397.60 338.60 L397.90 338.68 L398.20 338.87 L398.50 339.15 L398.80 339.53 L399.10 340.00 L399.40 340.54 L399.70 341.13 L400.00 341.78 L400.30 342.45 L400.60 342.67 L400.90 342.00 L401.20 341.34 L401.50 340.73 L401.80 340.17 L402.10 339.68 L402.40 339.27 L402.70 338.95 L403.00 338.73 L403.30 338.62 L403.60 338.61 L403.90 338.71 L404.20 338.92 L404.50 339.22 L404.80 339.62 L405.10 340.10 L405.40 340.65 L405.70 341.26 L406.00 341.91 L406.30 342.58 L406.60 342.54 L406.90 341.86 L407.20 341.22 L407.50 340.61 L407.80 340.07 L408.10 339.59 L408.40 339.20 L408.70 338.90 L409.00 338.70 L409.30 338.61 L409.60 338.62 L409.90 338.74 L410.20 338.97 L410.50 339.29 L410.80 339.71 L411.10 340.21 L411.40 340.77 L411.70 341.39 L412.00 342.04 L412.30 342.72 L412.60 342.40 L412.90 341.73 L413.20 341.09 L413.50 340.50 L413.80 339.97 L414.10 339.51 L414.40 339.13 L414.70 338.85 L415.00 338.67 L415.30 338.60 L415.60 338.64 L415.90 338.78 L416.20 339.03 L416.50 339.37 L416.80 339.80 L417.10 340.31 L417.40 340.89 L417.70 341.52 L418.00 342.18 L418.30 342.85 L418.60 342.27 L418.90 341.60 L419.20 340.97 L419.50 340.39 L419.80 339.87 L420.10 339.42 L420.40 339.07 L420.70 338.81 L421.00 338.65 L421.30 338.60 L421.60 338.66 L421.90 338.82 L422.20 339.09 L422.50 339.45 L422.80 339.90 L423.10 340.42 L423.40 341.01 L423.70 341.64 L424.00 342.31 L424.30 342.81 L424.60 342.13 L424.90 341.47 L425.20 340.85 L425.50 340.28 L425.80 339.77 L426.10 339.35 L426.40 339.01 L426.70 338.77 L427.00 338.63 L427.30 338.60 L427.60 338.68 L427.90 338.87 L428.20 339.15 L428.50 339.53 L428.80 340.00 L429.10 340.54 L429.40 341.13 L429.70 341.78 L430.00 342.45 L430.30 342.67 L430.60 342.00 L430.90 341.34 L431.20 340.73 L431.50 340.17 L431.80 339.68 L432.10 339.27 L432.40 338.95 L432.70 338.73 L433.00 338.62 L433.30 338.61 L433.60 338.71 L433.90 338.92 L434.20 339.22 L434.50 339.62 L434.80 340.10 L435.10 340.65 L435.40 341.26 L435.70 341.91 L436.00 342.58 L436.30 342.54 L436.60 341.86 L436.90 341.22 L437.20 340.61 L437.50 340.07 L437.80 339.59 L438.10 339.20 L438.40 338.90 L438.70 338.70 L439.00 338.61 L439.30 338.62 L439.60 338.74 L439.90 338.97 L440.20 339.29 L440.50 339.71 L440.80 340.21 L441.10 340.77 L441.40 341.39 L441.70 342.04 L442.00 342.72 L442.30 342.40 L442.60 341.73 L442.90 341.09 L443.20 340.50 L443.50 339.97 L443.80 339.51 L444.10 339.13 L444.40 338.85 L444.70 338.67 L445.00 338.60 L445.30 338.64 L445.60 338.78 L445.90 339.03 L446.20 339.37 L446.50 339.80 L446.80 340.31 L447.10 340.89 L447.40 341.52 L447.70 342.18 L448.00 342.85 L448.30 342.27 L448.60 341.60 L448.90 340.97 L449.20 340.39 L449.50 339.87 L449.80 339.42 L450.10 339.07 L450.40 338.81 L450.70 338.65 L451.00 338.60 L451.30 338.66 L451.60 338.82 L451.90 339.09 L452.20 339.45 L452.50 339.90 L452.80 340.42 L453.10 341.01 L453.40 341.64 L453.70 342.31 L454.00 342.81 L454.30 342.13 L454.60 341.47 L454.90 340.85 L455.20 340.28 L455.50 339.77 L455.80 339.35 L456.10 339.01 L456.40 338.77 L456.70 338.63 L457.00 338.60 L457.30 338.68 L457.60 338.87 L457.90 339.15 L458.20 339.53 L458.50 340.00 L458.80 340.54 L459.10 341.13 L459.40 341.78 L459.70 342.45 L460.00 342.67 L460.30 342.00 L460.60 341.34 L460.90 340.73 L461.20 340.17 L461.50 339.68 L461.80 339.27 L462.10 338.95 L462.40 338.73 L462.70 338.62 L463.00 338.61 L463.30 338.71 L463.60 338.92 L463.90 339.22 L464.20 339.62 L464.50 340.10 L464.80 340.65 L465.10 341.26 L465.40 341.91 L465.70 342.58 L466.00 342.54 L466.30 341.86 L466.60 341.22 L466.90 340.61 L467.20 340.07 L467.50 339.59 L467.80 339.20 L468.10 338.90 L468.40 338.70 L468.70 338.61 L469.00 338.62 L469.30 338.74 L469.60 338.97 L469.90 339.29 L470.20 339.71 L470.50 340.21 L470.80 340.77 L471.10 341.39 L471.40 342.04 L471.70 342.72 L472.00 342.40 L472.30 341.73 L472.60 341.09 L472.90 340.50 L473.20 339.97 L473.50 339.51 L473.80 339.13 L474.10 338.85 L474.40 338.67 L474.70 338.60 L475.00 338.64 L475.30 338.78 L475.60 339.03 L475.90 339.37 L476.20 339.80 L476.50 340.31 L476.80 340.89 L477.10 341.52 L477.40 342.18 L477.70 342.85 L478.00 342.27 L478.30 341.60 L478.60 340.97 L478.90 340.39 L479.20 339.87 L479.50 339.42 L479.80 339.07 L480.10 338.81 L480.40 338.65 L480.70 338.60 L481.00 338.66 L481.30 338.82 L481.60 339.09 L481.90 339.45 L482.20 339.90 L482.50 340.42 L482.80 341.01 L483.10 341.64 L483.40 342.31 L483.70 342.81 L484.00 342.13 L484.30 341.47 L484.60 340.85 L484.90 340.28 L485.20 339.77 L485.50 339.35 L485.80 339.01 L486.10 338.77 L486.40 338.63 L486.70 338.60 L487.00 338.68 L487.30 338.87 L487.60 339.15 L487.90 339.53 L488.20 340.00 L488.50 340.54 L488.80 341.13 L489.10 341.78 L489.40 342.45 L489.70 342.67 L490.00 342.00 L490.30 341.34 L490.60 340.73 L490.90 340.17 L491.20 339.68 L491.50 339.27 L491.80 338.95 L492.10 338.73 L492.40 338.62 L492.70 338.61 L493.00 338.71 L493.30 338.92" fill="none" stroke="#E05060" stroke-width="1.05"/>
<rect x="511.5" y="17.2" width="80" height="12" fill="#FAFAF6"/>
<text x="512.9" y="25.9" font-family='"Liberation Sans", sans-serif' font-size="9.2" font-weight="bold" fill="#0A0A0A" stroke="#0A0A0A" stroke-width="0.35" textLength="34.8" lengthAdjust="spacing">A1 Test</text>
<rect x="513" y="32" width="31.5" height="12.6" fill="#ECEADE"/>
<path d="M513.5 44.6 L513.5 32.5 L544.5 32.5" fill="none" stroke="#F6F5EE" stroke-width="1"/>
<path d="M513 44.1 L544.0 44.1 L544.0 32" fill="none" stroke="#7A786A" stroke-width="1.1"/>
<text x="516.7" y="41.1" font-family='"Liberation Sans", sans-serif' font-size="9.2" font-weight="bold" fill="#0A0A0A" stroke="#0A0A0A" stroke-width="0.35" textLength="24.1" lengthAdjust="spacing">A1: Y</text>
<rect x="547.8" y="31.9" width="11.5" height="12.4" fill="#F00000"/>
<text x="568" y="41.1" font-family='"Liberation Sans", sans-serif' font-size="9.2" font-weight="bold" fill="#0A0A0A" stroke="#0A0A0A" stroke-width="0.35" textLength="18" lengthAdjust="spacing">+5V</text>
<rect x="506" y="46.6" width="88" height="1" fill="#D6D4C6"/>
<rect x="506" y="47.6" width="88" height="1" fill="#F2F0E8"/>
<rect x="511.5" y="145.2" width="80" height="12" fill="#FAFAF6"/>
<text x="512.9" y="153.9" font-family='"Liberation Sans", sans-serif' font-size="9.2" font-weight="bold" fill="#0A0A0A" stroke="#0A0A0A" stroke-width="0.35" textLength="34.8" lengthAdjust="spacing">A2 Test</text>
<rect x="513" y="160" width="31.5" height="12.6" fill="#ECEADE"/>
<path d="M513.5 172.6 L513.5 160.5 L544.5 160.5" fill="none" stroke="#F6F5EE" stroke-width="1"/>
<path d="M513 172.1 L544.0 172.1 L544.0 160" fill="none" stroke="#7A786A" stroke-width="1.1"/>
<text x="516.7" y="169.1" font-family='"Liberation Sans", sans-serif' font-size="9.2" font-weight="bold" fill="#0A0A0A" stroke="#0A0A0A" stroke-width="0.35" textLength="24.1" lengthAdjust="spacing">A2: Y</text>
<rect x="547.8" y="159.9" width="11.5" height="12.4" fill="#3C0890"/>
<text x="565.5" y="169.1" font-family='"Liberation Sans", sans-serif' font-size="9.2" font-weight="bold" fill="#0A0A0A" stroke="#0A0A0A" stroke-width="0.35" textLength="23.3" lengthAdjust="spacing">+20V</text>
<rect x="506" y="174.6" width="88" height="1" fill="#D6D4C6"/>
<rect x="506" y="175.6" width="88" height="1" fill="#F2F0E8"/>
<rect x="511.5" y="273.2" width="80" height="12" fill="#FAFAF6"/>
<text x="512.9" y="281.9" font-family='"Liberation Sans", sans-serif' font-size="9.2" font-weight="bold" fill="#0A0A0A" stroke="#0A0A0A" stroke-width="0.35" textLength="34.8" lengthAdjust="spacing">A3 Test</text>
<rect x="513" y="288" width="31.5" height="12.6" fill="#ECEADE"/>
<path d="M513.5 300.6 L513.5 288.5 L544.5 288.5" fill="none" stroke="#F6F5EE" stroke-width="1"/>
<path d="M513 300.1 L544.0 300.1 L544.0 288" fill="none" stroke="#7A786A" stroke-width="1.1"/>
<text x="516.7" y="297.1" font-family='"Liberation Sans", sans-serif' font-size="9.2" font-weight="bold" fill="#0A0A0A" stroke="#0A0A0A" stroke-width="0.35" textLength="24.1" lengthAdjust="spacing">A3: Y</text>
<rect x="547.8" y="287.9" width="11.5" height="12.4" fill="#F00000"/>
<text x="568" y="297.1" font-family='"Liberation Sans", sans-serif' font-size="9.2" font-weight="bold" fill="#0A0A0A" stroke="#0A0A0A" stroke-width="0.35" textLength="18" lengthAdjust="spacing">+5V</text>
<rect x="506" y="302.6" width="88" height="1" fill="#D6D4C6"/>
<rect x="506" y="303.6" width="88" height="1" fill="#F2F0E8"/>
<rect x="504.2" y="15" width="1" height="408" fill="#D4D2C4"/>
<rect x="505.2" y="15" width="1.6" height="408" fill="#F0EEE4"/>
<rect x="595.2" y="15" width="1.2" height="408" fill="#C8C6B8"/>
<rect x="596.4" y="15" width="1" height="408" fill="#F4F2EA"/>
<rect x="597.4" y="15" width="42.6" height="408" fill="#EAE8D9"/>
<rect x="601.2" y="24.0" width="32.6" height="15.6" fill="#F80000"/>
<text x="602.3" y="36.0" font-family='"Liberation Sans", sans-serif' font-size="12.6" fill="#2A0000" stroke="#2A0000" stroke-width="0.75" textLength="14.5" lengthAdjust="spacingAndGlyphs">A1</text>
<rect x="627.8" y="29.2" width="6" height="5.6" fill="#FFFFFF"/>
<path d="M628.8 31.5 L630.4 33.2 L633 30.2" fill="none" stroke="#000" stroke-width="1.2"/>
<rect x="601.2" y="56.0" width="32.6" height="15.6" fill="#F80000"/>
<text x="602.3" y="68.0" font-family='"Liberation Sans", sans-serif' font-size="12.6" fill="#2A0000" stroke="#2A0000" stroke-width="0.75" textLength="14.5" lengthAdjust="spacingAndGlyphs">A2</text>
<rect x="627.8" y="61.2" width="6" height="5.6" fill="#FFFFFF"/>
<path d="M628.8 63.5 L630.4 65.2 L633 62.2" fill="none" stroke="#000" stroke-width="1.2"/>
<rect x="601.2" y="88.0" width="32.6" height="15.6" fill="#F80000"/>
<text x="602.3" y="100.0" font-family='"Liberation Sans", sans-serif' font-size="12.6" fill="#2A0000" stroke="#2A0000" stroke-width="0.75" textLength="14.5" lengthAdjust="spacingAndGlyphs">A3</text>
<rect x="627.8" y="93.2" width="6" height="5.6" fill="#FFFFFF"/>
<path d="M628.8 95.5 L630.4 97.2 L633 94.2" fill="none" stroke="#000" stroke-width="1.2"/>
<rect x="601.2" y="120.0" width="32.6" height="15.6" fill="#10E010"/>
<text x="602.3" y="132.0" font-family='"Liberation Sans", sans-serif' font-size="12.6" fill="#002000" stroke="#002000" stroke-width="0.75" textLength="14.5" lengthAdjust="spacingAndGlyphs">A4</text>
<rect x="627.8" y="125.2" width="6" height="5.6" fill="#FFFFFF"/>
<text x="602.8" y="164.1" font-family='"Liberation Sans", sans-serif' font-size="12.3" fill="#9E9C8E" stroke="#9E9C8E" stroke-width="0.35" textLength="14.2" lengthAdjust="spacingAndGlyphs">A5</text>
<path d="M628.5 162.1 L628.5 157.8 L633 157.8" fill="none" stroke="#9A988C" stroke-width="1"/>
<text x="602.8" y="196.1" font-family='"Liberation Sans", sans-serif' font-size="12.3" fill="#9E9C8E" stroke="#9E9C8E" stroke-width="0.35" textLength="14.2" lengthAdjust="spacingAndGlyphs">A6</text>
<path d="M628.5 194.1 L628.5 189.8 L633 189.8" fill="none" stroke="#9A988C" stroke-width="1"/>
<text x="602.8" y="228.1" font-family='"Liberation Sans", sans-serif' font-size="12.3" fill="#9E9C8E" stroke="#9E9C8E" stroke-width="0.35" textLength="14.2" lengthAdjust="spacingAndGlyphs">B1</text>
<path d="M628.5 226.1 L628.5 221.8 L633 221.8" fill="none" stroke="#9A988C" stroke-width="1"/>
<text x="602.8" y="260.1" font-family='"Liberation Sans", sans-serif' font-size="12.3" fill="#9E9C8E" stroke="#9E9C8E" stroke-width="0.35" textLength="14.2" lengthAdjust="spacingAndGlyphs">B2</text>
<path d="M628.5 258.1 L628.5 253.8 L633 253.8" fill="none" stroke="#9A988C" stroke-width="1"/>
<text x="602.8" y="292.1" font-family='"Liberation Sans", sans-serif' font-size="12.3" fill="#9E9C8E" stroke="#9E9C8E" stroke-width="0.35" textLength="14.2" lengthAdjust="spacingAndGlyphs">B3</text>
<path d="M628.5 290.1 L628.5 285.8 L633 285.8" fill="none" stroke="#9A988C" stroke-width="1"/>
<text x="602.8" y="324.1" font-family='"Liberation Sans", sans-serif' font-size="12.3" fill="#9E9C8E" stroke="#9E9C8E" stroke-width="0.35" textLength="14.2" lengthAdjust="spacingAndGlyphs">B4</text>
<path d="M628.5 322.1 L628.5 317.8 L633 317.8" fill="none" stroke="#9A988C" stroke-width="1"/>
<text x="602.8" y="356.1" font-family='"Liberation Sans", sans-serif' font-size="12.3" fill="#9E9C8E" stroke="#9E9C8E" stroke-width="0.35" textLength="14.2" lengthAdjust="spacingAndGlyphs">B5</text>
<path d="M628.5 354.1 L628.5 349.8 L633 349.8" fill="none" stroke="#9A988C" stroke-width="1"/>
<text x="602.8" y="388.1" font-family='"Liberation Sans", sans-serif' font-size="12.3" fill="#9E9C8E" stroke="#9E9C8E" stroke-width="0.35" textLength="14.2" lengthAdjust="spacingAndGlyphs">B6</text>
<path d="M628.5 386.1 L628.5 381.8 L633 381.8" fill="none" stroke="#9A988C" stroke-width="1"/>
<text x="10.6" y="419.8" font-family='"Liberation Sans", sans-serif' font-size="17.5" font-weight="bold" fill="#000" stroke="#000" stroke-width="0.3" textLength="27.4" lengthAdjust="spacingAndGlyphs">102</text>
<text x="470" y="419.8" font-family='"Liberation Sans", sans-serif' font-size="17.5" font-weight="bold" fill="#000" stroke="#000" stroke-width="0.3" textLength="18" lengthAdjust="spacingAndGlyphs">40</text>
<rect x="58" y="405.5" width="388" height="16" fill="#F3F2EA"/>
<rect x="50" y="405" width="404" height="1" fill="#DAD8CC"/>
<rect x="50" y="421" width="404" height="1" fill="#D0CEC2"/>
<rect x="50" y="405.5" width="8.5" height="16" fill="#F2F1E8"/>
<path d="M50.5 421.0 L50.5 406.0 L58.0 406.0" fill="none" stroke="#FFFFFF" stroke-width="1"/>
<path d="M50.5 421.0 L58.0 421.0 L58.0 406.0" fill="none" stroke="#A09E90" stroke-width="1"/>
<rect x="446" y="405.5" width="8" height="16" fill="#F2F1E8"/>
<path d="M446.5 421.0 L446.5 406.0 L453.5 406.0" fill="none" stroke="#FFFFFF" stroke-width="1"/>
<path d="M446.5 421.0 L453.5 421.0 L453.5 406.0" fill="none" stroke="#A09E90" stroke-width="1"/>
<path d="M52.5 413.5 L55 411.5 L55 415.5 Z" fill="#000"/>
<path d="M451.5 413.5 L449 411.5 L449 415.5 Z" fill="#000"/>
<path d="M292.5 420.5 L299.5 420.5 L299.5 405.5" fill="none" stroke="#908E80" stroke-width="1"/>
<clipPath id="rclip"><rect x="508.6" y="400" width="60" height="22"/></clipPath>
<text x="504.2" y="416.2" clip-path="url(#rclip)" font-family='"Liberation Sans", sans-serif' font-size="10" font-weight="bold" fill="#101010" stroke="#101010" stroke-width="0.3" textLength="38.4" lengthAdjust="spacing">Rozsah:</text>
<rect x="548.5" y="407.5" width="40" height="11" fill="#FBFBF8"/>
<text x="550.3" y="416.3" font-family='"Liberation Sans", sans-serif' font-size="9.6" font-weight="bold" fill="#101010" stroke="#101010" stroke-width="0.3" textLength="20.6" lengthAdjust="spacing">1,0 s</text>
<rect x="0" y="422.5" width="640" height="1" fill="#C4C2B4"/>
<rect x="0" y="423.5" width="640" height="1" fill="#FAFAF4"/>
<rect x="3" y="429" width="40" height="39.5" fill="#E9E7DA"/>
<path d="M3.5 468.0 L3.5 429.5 L42.5 429.5" fill="none" stroke="#F8F7F0" stroke-width="1.4"/>
<path d="M3.5 468.0 L42.5 468.0 L42.5 429.5" fill="none" stroke="#85837A" stroke-width="1.1"/>
<rect x="46" y="431.4" width="78.5" height="36" fill="#E9E7DA"/>
<path d="M46.5 467.3 L46.5 431.9 L124.5 431.9" fill="none" stroke="#F6F5EE" stroke-width="1.2"/>
<path d="M46.5 467 L124.5 467 L124.5 431.9" fill="none" stroke="#ACAA9C" stroke-width="1"/>
<rect x="128" y="429" width="40" height="39.5" fill="#E9E7DA"/>
<path d="M128.5 468.0 L128.5 429.5 L167.5 429.5" fill="none" stroke="#F8F7F0" stroke-width="1.4"/>
<path d="M128.5 468.0 L167.5 468.0 L167.5 429.5" fill="none" stroke="#85837A" stroke-width="1.1"/>
<rect x="168" y="429" width="40" height="39.5" fill="#E9E7DA"/>
<path d="M168.5 468.0 L168.5 429.5 L207.5 429.5" fill="none" stroke="#F8F7F0" stroke-width="1.4"/>
<path d="M168.5 468.0 L207.5 468.0 L207.5 429.5" fill="none" stroke="#85837A" stroke-width="1.1"/>
<rect x="208" y="429" width="40" height="39.5" fill="#E9E7DA"/>
<path d="M208.5 468.0 L208.5 429.5 L247.5 429.5" fill="none" stroke="#F8F7F0" stroke-width="1.4"/>
<path d="M208.5 468.0 L247.5 468.0 L247.5 429.5" fill="none" stroke="#85837A" stroke-width="1.1"/>
<rect x="248" y="429" width="40" height="39.5" fill="#E9E7DA"/>
<path d="M248.5 468.0 L248.5 429.5 L287.5 429.5" fill="none" stroke="#F8F7F0" stroke-width="1.4"/>
<path d="M248.5 468.0 L287.5 468.0 L287.5 429.5" fill="none" stroke="#85837A" stroke-width="1.1"/>
<rect x="302" y="429" width="40" height="39.5" fill="#E9E7DA"/>
<path d="M302.5 468.0 L302.5 429.5 L341.5 429.5" fill="none" stroke="#F8F7F0" stroke-width="1.4"/>
<path d="M302.5 468.0 L341.5 468.0 L341.5 429.5" fill="none" stroke="#85837A" stroke-width="1.1"/>
<rect x="342" y="429" width="40" height="39.5" fill="#E9E7DA"/>
<path d="M342.5 468.0 L342.5 429.5 L381.5 429.5" fill="none" stroke="#F8F7F0" stroke-width="1.4"/>
<path d="M342.5 468.0 L381.5 468.0 L381.5 429.5" fill="none" stroke="#85837A" stroke-width="1.1"/>
<rect x="382" y="429" width="40" height="39.5" fill="#E9E7DA"/>
<path d="M382.5 468.0 L382.5 429.5 L421.5 429.5" fill="none" stroke="#F8F7F0" stroke-width="1.4"/>
<path d="M382.5 468.0 L421.5 468.0 L421.5 429.5" fill="none" stroke="#85837A" stroke-width="1.1"/>
<rect x="422" y="429" width="40" height="39.5" fill="#E9E7DA"/>
<path d="M422.5 468.0 L422.5 429.5 L461.5 429.5" fill="none" stroke="#F8F7F0" stroke-width="1.4"/>
<path d="M422.5 468.0 L461.5 468.0 L461.5 429.5" fill="none" stroke="#85837A" stroke-width="1.1"/>
<rect x="475" y="429" width="40" height="39.5" fill="#E9E7DA"/>
<rect x="475.5" y="429.5" width="39" height="38.5" fill="none" stroke="#555548" stroke-width="1"/>
<path d="M476.5 467.0 L513.5 467.0 L513.5 430.5" fill="none" stroke="#FFFFFF" stroke-width="1"/>
<path d="M476.5 467.0 L476.5 430.5 L513.5 430.5" fill="none" stroke="#A8A698" stroke-width="1"/>
<rect x="515" y="429" width="40" height="39.5" fill="#E9E7DA"/>
<path d="M515.5 468.0 L515.5 429.5 L554.5 429.5" fill="none" stroke="#F8F7F0" stroke-width="1.4"/>
<path d="M515.5 468.0 L554.5 468.0 L554.5 429.5" fill="none" stroke="#85837A" stroke-width="1.1"/>
<rect x="555" y="429" width="40" height="39.5" fill="#E9E7DA"/>
<path d="M555.5 468.0 L555.5 429.5 L594.5 429.5" fill="none" stroke="#F8F7F0" stroke-width="1.4"/>
<path d="M555.5 468.0 L594.5 468.0 L594.5 429.5" fill="none" stroke="#85837A" stroke-width="1.1"/>
<rect x="595" y="429" width="40" height="39.5" fill="#E9E7DA"/>
<path d="M595.5 468.0 L595.5 429.5 L634.5 429.5" fill="none" stroke="#F8F7F0" stroke-width="1.4"/>
<path d="M595.5 468.0 L634.5 468.0 L634.5 429.5" fill="none" stroke="#85837A" stroke-width="1.1"/>
<path d="M16.3 450.9 L20.7 454.9 L30.3 445.8" fill="none" stroke="#0A5022" stroke-width="2.7" stroke-linejoin="miter"/>
<path d="M17 451.1 L20.7 454.4 L29.8 446" fill="none" stroke="#68D888" stroke-width="0.9"/>
<path d="M20.5 448.3 L30.8 448.1" fill="none" stroke="#183828" stroke-width="1.1"/>
<circle cx="82" cy="438.8" r="3.5" fill="#1E6E1E" stroke="#062806" stroke-width="0.9"/>
<circle cx="81.3" cy="438" r="1.2" fill="#50B050"/>
<text x="59.8" y="465.6" font-family='"Liberation Sans", sans-serif' font-size="8" fill="#4A4A4A" stroke="#4A4A4A" stroke-width="0.15" textLength="51" lengthAdjust="spacingAndGlyphs">00095BE0792C</text>
<path d="M145.2 446.8 Q146.5 443 150.3 443.1 Q153.8 443.4 153.4 447 Q153 449.3 150.3 451.2 L149 453.4" fill="none" stroke="#58C8E0" stroke-width="3.2" opacity="0.85"/>
<path d="M145.2 446.8 Q146.5 443 150.3 443.1 Q153.8 443.4 153.4 447 Q153 449.3 150.3 451.2 L149 453.4" fill="none" stroke="#0A5868" stroke-width="1.4"/>
<rect x="147.9" y="455.3" width="2.4" height="2.2" fill="#203838"/>
<text x="188.7" y="453.7" font-family='"Liberation Sans", sans-serif' font-size="11" font-weight="bold" fill="#FAFAF4" text-anchor="middle">F2</text>
<text x="188" y="453" font-family='"Liberation Sans", sans-serif' font-size="11" font-weight="bold" fill="#A4A294" text-anchor="middle">F2</text>
<text x="228.7" y="453.7" font-family='"Liberation Sans", sans-serif' font-size="11" font-weight="bold" fill="#FAFAF4" text-anchor="middle">F3</text>
<text x="228" y="453" font-family='"Liberation Sans", sans-serif' font-size="11" font-weight="bold" fill="#A4A294" text-anchor="middle">F3</text>
<text x="322.7" y="453.7" font-family='"Liberation Sans", sans-serif' font-size="11" font-weight="bold" fill="#FAFAF4" text-anchor="middle">F5</text>
<text x="322" y="453" font-family='"Liberation Sans", sans-serif' font-size="11" font-weight="bold" fill="#A4A294" text-anchor="middle">F5</text>
<text x="402.7" y="453.7" font-family='"Liberation Sans", sans-serif' font-size="11" font-weight="bold" fill="#FAFAF4" text-anchor="middle">F7</text>
<text x="402" y="453" font-family='"Liberation Sans", sans-serif' font-size="11" font-weight="bold" fill="#A4A294" text-anchor="middle">F7</text>
<text x="442.7" y="453.7" font-family='"Liberation Sans", sans-serif' font-size="11" font-weight="bold" fill="#FAFAF4" text-anchor="middle">F8</text>
<text x="442" y="453" font-family='"Liberation Sans", sans-serif' font-size="11" font-weight="bold" fill="#A4A294" text-anchor="middle">F8</text>
<path d="M264.5 441.8 L270.3 441.8 L273.6 445 L273.6 452 L264.5 452 Z" fill="#FFFFFF" stroke="#101010" stroke-width="1.1"/>
<path d="M266 444.3 L269.5 444.3 M266 446.3 L272 446.3 M266 448.3 L272 448.3 M266 450.2 L272 450.2" stroke="#303030" stroke-width="0.8" stroke-dasharray="1.2 0.6"/>
<rect x="261.2" y="451.6" width="15.6" height="5.6" rx="1.4" fill="#D8D8D8" stroke="#101010" stroke-width="1.3"/>
<line x1="262.3" y1="453.3" x2="275.7" y2="453.3" stroke="#FFFFFF" stroke-width="0.9"/>
<line x1="262.3" y1="455.3" x2="275.7" y2="455.3" stroke="#F0F0F0" stroke-width="0.9"/>
<path d="M358.6 443 L365 453 M365 443 L358.6 453 M355 455.2 L369.5 455.2 M355 453.5 L355 457 M369.5 453.5 L369.5 457 M360 454 L360 456.5 M364.5 454 L364.5 456.5" fill="none" stroke="#949284" stroke-width="1"/>
<g transform="translate(0 0)">
<path d="M497.1 442.2 L502.75 449.25 L497.1 456.5 L491.5 449.25 Z" fill="#F2F1E8"/>
<path d="M493.3 447 L497.1 442.2 L502.75 449.25 L497.1 456.5 L493.3 451.8" fill="none" stroke="#000" stroke-width="1.25"/>
<path d="M488.2 449.25 L491.7 446.1 L491.7 453.1 Z" fill="#000"/>
</g>
<g transform="translate(40 0)">
<path d="M497.1 442.2 L502.75 449.25 L497.1 456.5 L491.5 449.25 Z" fill="#F2F1E8"/>
<path d="M493.3 447 L497.1 442.2 L502.75 449.25 L497.1 456.5 L493.3 451.8" fill="none" stroke="#000" stroke-width="1.25"/>
<path d="M491.7 449.25 L488 446 L488 453 Z" fill="#000"/>
</g>
<path d="M568.1 456.3 L582.6 442.3" stroke="#000" stroke-width="1.3" fill="none"/>
<path d="M571.3 446.2 L574.3 443.2 Q575.2 442.4 576.1 443.2 L582.1 449.1 Q582.9 449.9 582.1 450.7 L576.2 456.3 Q575.3 457.1 574.4 456.3 L572.3 454.2" stroke="#000" stroke-width="1.3" fill="none"/>
<path d="M571.2 448.8 L577.2 443.3 M574.3 453.8 L580.6 448.3" stroke="#303030" stroke-width="0.8" stroke-dasharray="1 0.7" fill="none"/>
<path d="M610.8 447.4 L615.5 442.8 L622.4 449.6 L615.5 456 L611.2 451.8" fill="none" stroke="#FFFFFF" stroke-width="1" transform="translate(0.7 0.7)"/>
<path d="M610.8 447.4 L615.5 442.8 L622.4 449.6 L615.5 456 L611.2 451.8" fill="none" stroke="#A8A698" stroke-width="1.1"/>
<path d="M608.5 449.7 L614 449.7" fill="none" stroke="#B0AEA0" stroke-width="0.8" stroke-dasharray="1 0.8"/>
<path d="M617.8 449.7 L614.6 447 L614.6 452.4 Z" fill="#8C8A7C"/>
</svg></body></html>
